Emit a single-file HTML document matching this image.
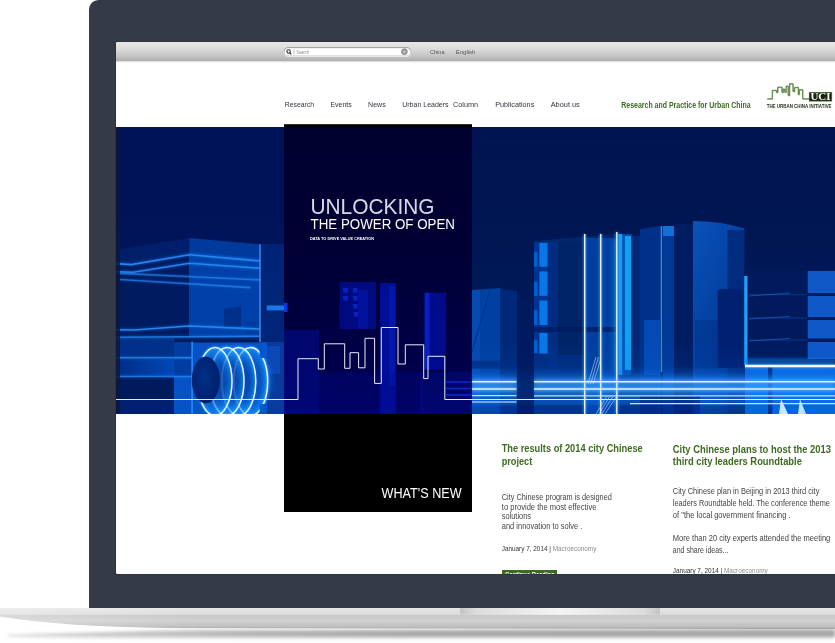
<!DOCTYPE html>
<html lang="en">
<head>
<meta charset="utf-8">
<title>The Urban China Initiative</title>
<style>
html,body{margin:0;padding:0;}
body{width:835px;height:643px;overflow:hidden;background:#fff;position:relative;font-family:"Liberation Sans",sans-serif;}
.abs{position:absolute;}
.t{position:absolute;white-space:nowrap;line-height:1;margin:0;padding:0;}
#bezel{left:89px;top:0;width:760px;height:608px;background:#353a47;border-top-left-radius:9.5px;}
#screen{left:116px;top:42px;width:719px;height:532px;background:#fff;overflow:hidden;border-top-left-radius:1.5px;border-bottom-left-radius:1.5px;box-shadow:0 0 0 1px #2e333f;}
#toolbar{left:0;top:0;width:719px;height:19px;background:linear-gradient(#e9e9e9 0%,#dcdcdc 35%,#c4c4c4 75%,#adadad 100%);}
#search{left:168.2px;top:5.3px;width:126.6px;height:9px;border-radius:5px;background:#fff;box-shadow:inset 0 1px 1.2px #9c9c9c,inset 0 0 0 .6px #c4c4c4,0 1px 0 #e8e8e8;}
#hero{left:0;top:85px;width:719px;height:287px;}
.nav{color:#3a3a44;}
.green{color:#3d6b22;}
.h{font-weight:bold;color:#3d6b22;}
.b{color:#4a4a4a;}
.m{color:#333;}
.m i{font-style:normal;color:#8a8a8a;}
</style>
</head>
<body>
<div id="bezel" class="abs"></div>
<div id="screen" class="abs">
  <div id="toolbar" class="abs"></div>
  <div class="abs" style="left:0;top:19px;width:719px;height:2px;background:linear-gradient(#d8d8d8,#fff);"></div>
  <div id="search" class="abs"></div>
<svg id="hero" class="abs" width="719" height="287" viewBox="116 127 719 287" preserveAspectRatio="none">
<defs>
<linearGradient id="bg" x1="0" y1="0" x2="0" y2="1">
<stop offset="0" stop-color="#001350"/><stop offset=".4" stop-color="#001754"/><stop offset=".7" stop-color="#001a5a"/><stop offset="1" stop-color="#00246c"/>
</linearGradient>
<linearGradient id="lg1" x1="0" y1="0" x2="0" y2="1">
<stop offset="0" stop-color="#0a3fd0" stop-opacity="0"/><stop offset=".35" stop-color="#0a3fd0" stop-opacity=".3"/><stop offset="1" stop-color="#0b46e0" stop-opacity=".45"/>
</linearGradient>
<linearGradient id="cy" x1="0" y1="0" x2="0" y2="1">
<stop offset="0" stop-color="#3b9cff"/><stop offset="1" stop-color="#0a50c8"/>
</linearGradient>
<filter id="glow" x="-20%" y="-20%" width="140%" height="140%"><feGaussianBlur stdDeviation="1.2"/></filter>
<filter id="glow2" x="-20%" y="-50%" width="140%" height="200%"><feGaussianBlur stdDeviation="2.5"/></filter>
</defs>
<rect x="116" y="127" width="719" height="287" fill="url(#bg)"/>
<!-- left structure -->
<rect id="tl" x="116" y="127" width="168" height="125" fill="#00125e" opacity=".6"/>
<!--LEFTS-->
<g id="leftpart">
<defs>
<radialGradient id="disc" cx=".5" cy=".5" r=".5">
<stop offset="0" stop-color="#003088"/><stop offset=".6" stop-color="#0448b0"/><stop offset=".82" stop-color="#0c78e8"/><stop offset="1" stop-color="#30a8ff"/>
</radialGradient>
<radialGradient id="sph" cx=".45" cy=".45" r=".6">
<stop offset="0" stop-color="#003088"/><stop offset="1" stop-color="#001e68"/>
</radialGradient>
<clipPath id="coilclip"><polygon points="150,330 259.5,330 259.5,358 272,358 272,404 259.5,404 259.5,414 150,414"/></clipPath>
<linearGradient id="band2" x1="0" y1="0" x2="1" y2="0"><stop offset="0" stop-color="#002c84"/><stop offset="1" stop-color="#0048b8"/></linearGradient>
</defs>
<!-- box body -->
<polygon points="116,262 189,252 189,337 116,337.500" fill="#001c62" opacity=".8"/>
<polygon points="189,252 260,258 260,337 189,337" fill="#0040a8"/>
<polygon points="189.3,238 260,244.3 260,261 189.3,254.8" fill="#0044ac" opacity=".8"/>
<polygon points="116,250 189.3,238 189.3,254.8 131,264.6 116,263.6" fill="#002a80" opacity=".45"/>
<polygon points="224,309 241,306.500 241,327 224,327" fill="#002c80" opacity=".8"/>
<rect x="246" y="322" width="14" height="14" fill="#00389a" opacity=".8"/>
<rect x="260" y="244" width="24" height="98" fill="#002a86" opacity=".7"/>
<rect x="260" y="342" width="24" height="72" fill="#0a40a8" opacity=".85"/>
<rect x="264" y="346" width="16" height="28" fill="#1050c0" opacity=".7"/>
<!-- lower-left bands -->
<rect x="116" y="338" width="58" height="19" fill="#003088"/>
<rect x="116" y="359" width="58" height="17" fill="url(#band2)"/>
<rect x="116" y="377" width="58" height="22" fill="#001a5e"/>
<rect x="116" y="400.500" width="58" height="13.500" fill="#002070"/>
<!-- bright column behind coil -->
<rect x="174" y="342.500" width="93" height="71.500" fill="#0858d0" opacity=".9"/>
<rect x="174" y="342.500" width="18" height="34" fill="#003898" opacity=".85"/>
<ellipse cx="234" cy="381" rx="38" ry="36" fill="#1888f8" opacity=".35" filter="url(#glow2)"/>
<rect x="191.300" y="341.600" width="1.600" height="72.400" fill="#2a90ff" opacity=".9"/>
<rect x="266.700" y="305.400" width="19.300" height="5" fill="#1878e8"/>
<!-- thin light lines -->
<g fill="none" stroke="#1078e8" stroke-width="3.400" opacity=".4" filter="url(#glow)">
<polyline points="116,263.6 131.3,264.6 189.3,254.8 260,261"/>
<polyline points="116,271.7 133.3,272.2 189.3,263.2 260,268.3"/>
<polyline points="120,273.4 260,279.9" opacity=".7"/>
<polyline points="120,279.5 250.4,287.6" opacity=".7"/>
<polyline points="116,329.8 134,330 189,326 260,329"/>
<polyline points="116,337.3 260,336.3" opacity=".8"/>
<polyline points="116,357.8 192,357.8" opacity=".9"/>
<polyline points="116,376.5 192,376.5" opacity=".8"/>

</g>
<g fill="none" stroke="#2a88f2" stroke-width="1.600" opacity=".95">
<polyline points="116,263.6 131.3,264.6 189.3,254.8 260,261"/>
<polyline points="116,271.7 133.3,272.2 189.3,263.2 260,268.3"/>
<polyline points="120,273.4 260,279.9" opacity=".7"/>
<polyline points="120,279.5 250.4,287.6" opacity=".7"/>
<polyline points="116,329.8 134,330 189,326 260,329"/>
<polyline points="116,337.3 260,336.3" opacity=".8"/>
<polyline points="116,357.8 192,357.8" opacity=".9"/>
<polyline points="116,376.5 192,376.5" opacity=".8"/>
<line x1="260" y1="244.300" x2="260" y2="342" stroke="#3a90f8" stroke-width="1.5"/>
</g>
<!-- coil: back to front -->
<g clip-path="url(#coilclip)">
<g stroke="#38a8ff" stroke-width="3.6" opacity=".55" fill="none" filter="url(#glow)">
<ellipse cx="250.700" cy="381.500" rx="17" ry="34"/><ellipse cx="238.800" cy="381.500" rx="17" ry="34"/><ellipse cx="227" cy="381.500" rx="17" ry="34"/><ellipse cx="215" cy="381.500" rx="17" ry="34"/>
</g>
<g stroke="#e6f6ff" stroke-width="1.5" fill="url(#disc)" fill-opacity=".55">
<ellipse cx="250.700" cy="381.500" rx="17" ry="34"/><ellipse cx="238.800" cy="381.500" rx="17" ry="34"/><ellipse cx="227" cy="381.500" rx="17" ry="34"/><ellipse cx="215" cy="381.500" rx="17" ry="34"/>
</g>
</g>
<ellipse cx="205.800" cy="380" rx="14" ry="23.500" fill="url(#sph)"/>
</g>
<!--LEFTE-->
<!--RIGHTS-->
<g id="rightpart">
<defs>
<linearGradient id="rlow" x1="0" y1="0" x2="0" y2="1">
<stop offset="0" stop-color="#0868e0" stop-opacity="0"/><stop offset=".35" stop-color="#0868e0" stop-opacity=".08"/><stop offset=".5" stop-color="#0c70e8" stop-opacity=".45"/><stop offset=".62" stop-color="#1484f2" stop-opacity=".62"/><stop offset=".86" stop-color="#0c6ce4" stop-opacity=".55"/><stop offset=".9" stop-color="#0858d0" stop-opacity=".3"/><stop offset="1" stop-color="#0858d0" stop-opacity=".25"/>
</linearGradient>
<linearGradient id="face" x1="0" y1="0" x2=".6" y2="1">
<stop offset="0" stop-color="#0a52ba"/><stop offset=".45" stop-color="#0444a6"/><stop offset="1" stop-color="#003490"/>
</linearGradient>
</defs>
<!-- left building -->
<polygon points="472,290 500.5,288 500.5,414 472,414" fill="#0040a2"/>
<polygon points="472,290 480,289.500 480,414 472,414" fill="#0a50b8" opacity=".6"/>
<polygon points="500.5,289 517,291 517,414 500.5,414" fill="#002878"/>
<rect x="472" y="360.700" width="29" height="8" fill="#002c80" opacity=".8"/>
<line x1="472" y1="352" x2="490" y2="290" stroke="#002c80" stroke-width=".8"/>
<rect x="517" y="300" width="17" height="114" fill="#001a60" opacity=".6"/>
<!-- mid building -->
<polygon points="534,241 617,234 640,236 640,414 534,414" fill="#00276e"/>
<rect x="557" y="242" width="28" height="130" fill="#001d5e" opacity=".3"/>
<rect x="585" y="238" width="32" height="176" fill="#0042a4" opacity=".9"/>
<rect x="548.400" y="242" width="9.200" height="130" fill="#003088" opacity=".8"/>
<rect x="534" y="242" width="14.400" height="112" fill="#003490"/>
<g fill="#0060d0">
<rect x="534" y="252" width="3.400" height="14.800"/><rect x="534" y="282" width="3.400" height="14"/><rect x="534" y="310" width="3.400" height="15"/><rect x="534" y="340" width="3.400" height="13"/>
</g>
<g fill="#0878e8">
<rect x="539.400" y="243" width="8.100" height="23.800"/><rect x="539.400" y="271.400" width="8.100" height="24.400"/><rect x="539.400" y="300.500" width="8.100" height="24.500"/><rect x="539.400" y="333" width="8.100" height="20.600"/>
</g>
<rect x="534" y="327" width="83" height="5" fill="#001a5c" opacity=".7"/>
<rect x="534" y="355" width="50" height="20" fill="#002e84" opacity=".7"/>
<!-- cyan band -->
<rect id="cglow" x="612" y="240" width="26" height="132" fill="#1090f0" opacity=".35" filter="url(#glow2)"/>
<rect x="617.700" y="234" width="14" height="141" fill="#0048b0"/>
<rect x="618.400" y="234" width="3.900" height="141" fill="#10a0f0"/>
<rect x="624.800" y="236" width="6.500" height="134" fill="#10a0f0"/>
<rect x="631.300" y="236" width="9" height="139" fill="#002878"/>
<!-- right cylinder building -->
<polygon points="640,229 661,226 661,414 640,414" fill="#003088"/>
<rect x="644" y="320" width="16" height="55" fill="#0860d8" opacity=".55"/>
<rect x="663" y="226" width="11" height="10" fill="#1070d8"/>
<rect x="663" y="236" width="11" height="178" fill="#003898"/>
<rect x="674" y="224" width="19" height="190" fill="#001d62"/>
<path d="M693,221 Q720,221 744.200,228.400 L744.200,414 L693,414 Z" fill="url(#face)"/>
<rect x="727.600" y="230" width="16.600" height="184" fill="#002878" opacity=".85"/>
<rect x="695" y="320" width="22" height="48" fill="#003088" opacity=".5"/>
<path d="M717.600,292.500 Q717.600,288.900 722,288.900 L739,288.900 Q743.400,288.900 743.400,292.500 L743.400,368 L717.600,368 Z" fill="#002070"/>
<!-- far right building -->
<rect x="744" y="270" width="91" height="95" fill="#001a5c"/>
<rect x="744.200" y="276" width="3.300" height="89" fill="#20a0f8"/>
<g fill="#1058c8">
<rect x="807.700" y="271" width="27.300" height="22"/><rect x="807.700" y="296" width="27.300" height="21"/><rect x="807.700" y="320" width="27.300" height="18.500"/><rect x="807.700" y="342" width="27.300" height="17"/>
</g>
<g stroke="#0848b0" stroke-width=".8" opacity=".8"><line x1="749" y1="294.700" x2="807" y2="294.700"/><line x1="749" y1="318" x2="807" y2="318"/><line x1="749" y1="340" x2="807" y2="340"/></g>
<rect x="745" y="358" width="90" height="8" fill="#1080f0" opacity=".45" filter="url(#glow)"/>
<rect x="745" y="366" width="90" height="48" fill="#0a6ae2"/>
<rect x="768" y="367" width="4.400" height="47" fill="#002878"/>
<!-- lower glow -->
<rect x="472" y="340" width="363" height="74" fill="url(#rlow)"/>
<rect x="472" y="377" width="44.400" height="16" fill="#58b8ff" opacity=".3" filter="url(#glow2)"/><rect x="534" y="377" width="301" height="16" fill="#58b8ff" opacity=".3" filter="url(#glow2)"/>
<rect x="517" y="330" width="17" height="84" fill="#001a60" opacity=".75"/>
<rect x="640" y="396" width="60" height="18" fill="#002070" opacity=".5"/>
<!-- vertical lines -->
<g stroke="#58b0ff" stroke-width="3.500" opacity=".5" filter="url(#glow)">
<line x1="584.700" y1="234" x2="584.700" y2="414"/><line x1="600.700" y1="234" x2="600.700" y2="414"/><line x1="616.800" y1="232" x2="616.800" y2="414"/>
</g>
<g stroke="#e4f4ff" stroke-width="1.400">
<line x1="584.700" y1="234" x2="584.700" y2="414"/><line x1="600.700" y1="234" x2="600.700" y2="414"/><line x1="616.800" y1="232" x2="616.800" y2="414"/>
</g>
<line x1="661.500" y1="226" x2="661.500" y2="372" stroke="#1a90f0" stroke-width="1.600"/>
<!-- horizontal lines -->
<g stroke="#70c0ff" stroke-width="4" opacity=".45" filter="url(#glow)">
<line x1="472" y1="381.800" x2="516.400" y2="381.800"/><line x1="534" y1="381.800" x2="835" y2="381.800"/>
<line x1="472" y1="389" x2="516.400" y2="389"/><line x1="534" y1="389" x2="835" y2="389"/>
<line x1="745" y1="366" x2="835" y2="366"/>
</g>
<g stroke="#dcf0ff" stroke-width="1.500">
<line x1="472" y1="381.800" x2="516.400" y2="381.800"/><line x1="534" y1="381.800" x2="835" y2="381.800"/>
<line x1="472" y1="389" x2="516.400" y2="389"/><line x1="534" y1="389" x2="835" y2="389"/>
<line x1="472" y1="402" x2="516.400" y2="402" stroke-width="1.200"/>
<line x1="745" y1="366" x2="835" y2="366" stroke-width="2.400" stroke="#f0faff"/>
</g>
<g stroke="#c0e2ff" stroke-width="1.200">
<line x1="472" y1="395.600" x2="516.400" y2="395.600"/><line x1="534" y1="395.800" x2="835" y2="395.800"/><line x1="630" y1="403.600" x2="835" y2="403.600"/>
</g>
<g id="hatch" stroke="#d8ecff" stroke-width=".7" opacity=".75">
<line x1="588" y1="384" x2="596" y2="357"/><line x1="590.500" y1="384" x2="598.500" y2="357"/><line x1="593" y1="384" x2="601" y2="358"/>
<line x1="596" y1="414" x2="607" y2="396"/><line x1="599" y1="414" x2="610" y2="396"/><line x1="602" y1="414" x2="613" y2="396"/><line x1="605" y1="414" x2="616" y2="397"/>
</g>
<g stroke="#2a80e8" stroke-width=".7" opacity=".7">
<line x1="749" y1="296" x2="790" y2="293"/><line x1="749" y1="319" x2="790" y2="316.500"/><line x1="749" y1="341" x2="790" y2="338.500"/>
</g>
<polygon points="779,414 781,399 788,414" fill="#e0f4ff" opacity=".9"/>
<polygon points="798,414 800,399 806,414" fill="#e0f4ff" opacity=".85"/>
</g>
<!--RIGHTE-->
<rect x="116" y="127" width="4" height="287" fill="#0e1838" opacity=".85"/>
</svg>

<div class="abs" style="left:168px;top:82px;width:188px;height:3px;background:#000;"></div>
<div id="pline" class="abs" style="left:168px;top:81.700px;width:188px;height:.7px;background:#2c3626;"></div>
<div class="abs" style="left:168px;top:85px;width:188px;height:287px;background:linear-gradient(#00002e 0%,#000034 40%,#00003c 60%,#000048 80%,#000058 100%);"></div>
<svg class="abs" style="left:168px;top:85px;" width="188" height="287" viewBox="284 127 188 287">
<rect x="339.500" y="282" width="36.500" height="47" fill="#000c8c" opacity=".85"/>
<g fill="#0a28c8" opacity=".85"><rect x="343" y="288" width="5" height="4.500"/><rect x="353" y="288" width="4.500" height="4.500"/><rect x="343" y="296" width="5" height="4.500"/><rect x="353" y="296" width="4.500" height="4.500"/><rect x="353" y="304" width="4.500" height="4.500"/><rect x="354" y="312" width="4" height="4.500"/></g>
<rect x="358" y="290" width="10" height="39" fill="#0418b0" opacity=".6"/>
<rect x="380" y="283" width="16" height="131" fill="#0010a8" opacity=".85"/>
<rect x="389" y="286" width="6" height="100" fill="#0820c0" opacity=".5"/>
<rect x="424.600" y="292.700" width="21.400" height="77" fill="#000ea0" opacity=".8"/>
<rect x="424.600" y="292.700" width="5" height="77" fill="#0a28d0" opacity=".75"/>
<rect x="284" y="330" width="35" height="84" fill="#000c90" opacity=".55"/>
<rect x="284" y="303" width="3.500" height="9" fill="#0a38e0"/>
<rect x="319" y="372" width="105" height="42" fill="#000a88" opacity=".3"/>
<rect x="420" y="372" width="52" height="42" fill="#000c90" opacity=".4"/>
<g stroke="#1030d8" stroke-width="1.600" opacity=".8"><line x1="446" y1="382" x2="472" y2="382"/><line x1="446" y1="388.500" x2="472" y2="388.500"/><line x1="446" y1="395" x2="472" y2="395"/></g>
</svg>
<div class="abs" style="left:168px;top:372px;width:188px;height:98px;background:#000;"></div>
<svg class="abs" style="left:0;top:85px;" width="719" height="287" viewBox="116 127 719 287">
<polyline fill="none" stroke="#e8ecf8" stroke-width="1" points="116,399.5 298,399.5 298,358.7 318.3,358.7 318.3,369 324.3,369 324.3,343.8 344.7,343.8 344.7,368.3 350,368.3 350,352.7 358.6,352.7 358.6,367.8 365,367.8 365,338.3 374.6,338.3 374.6,383.4 381.3,383.4 381.3,327.5 398,327.5 398,364 405.3,364 405.3,344.8 423.7,344.8 423.7,378.6 428,378.6 428,356.3 444.8,356.3 444.8,399.5 835,399.5"/>
</svg>

<!--LOGOS-->
<svg class="abs" style="left:0;top:0;" width="719" height="80" viewBox="0 0 719 80">
<polyline fill="none" stroke="#1c2414" stroke-width=".7" stroke-linejoin="round" points="651.0,56.8 656.2,56.8 656.2,48.3 660.4,48.3 660.4,50.4 661.6,50.4 661.6,45.1 665.9,45.1 665.9,50.3 667.0,50.3 667.0,47.0 668.7,47.0 668.7,50.2 670.1,50.2 670.1,44.0 672.1,44.0 672.1,53.4 673.4,53.4 673.4,41.7 676.9,41.7 676.9,49.4 678.4,49.4 678.4,45.3 682.2,45.3 682.2,52.4 683.1,52.4 683.1,47.7 686.6,47.7 686.6,56.8 693.4,56.8" transform="translate(.5,.5)" opacity=".55"/>
<polyline fill="none" stroke="#4c7e2c" stroke-width=".9" stroke-linejoin="round" points="651.0,56.8 656.2,56.8 656.2,48.3 660.4,48.3 660.4,50.4 661.6,50.4 661.6,45.1 665.9,45.1 665.9,50.3 667.0,50.3 667.0,47.0 668.7,47.0 668.7,50.2 670.1,50.2 670.1,44.0 672.1,44.0 672.1,53.4 673.4,53.4 673.4,41.7 676.9,41.7 676.9,49.4 678.4,49.4 678.4,45.3 682.2,45.3 682.2,52.4 683.1,52.4 683.1,47.7 686.6,47.7 686.6,56.8 693.4,56.8"/>
<rect x="693.2" y="50.3" width="22.6" height="8.8" fill="#18240e"/>
<rect x="693.2" y="50.3" width="22.6" height="8.8" fill="none" stroke="#3d6b22" stroke-width=".6"/>
<circle cx="172.600" cy="9.500" r="1.700" fill="none" stroke="#333" stroke-width="1.100"/>
<line x1="173.800" y1="10.800" x2="175.300" y2="12.400" stroke="#333" stroke-width="1.200"/>
<line x1="178" y1="7.300" x2="178" y2="12.300" stroke="#999" stroke-width=".6"/>
<circle cx="288.400" cy="9.700" r="2.900" fill="#9a9a9a" stroke="#777" stroke-width=".7"/>
<circle cx="288.400" cy="9.700" r="1.500" fill="#bdbdbd"/>
</svg>
<!--LOGOE-->
<div id="btn" class="abs" style="left:385.7px;top:527.6px;width:55px;height:10px;background:#3d6b22;"></div>
<svg class="abs" style="left:0;top:0;will-change:transform;" width="719" height="532" viewBox="0 0 719 532" font-family="Liberation Sans, sans-serif">
<text id="t_unlock" x="194.5" y="172.0" font-size="22" textLength="124.0" lengthAdjust="spacingAndGlyphs" fill="#f4f6ff" fill-opacity=".88">UNLOCKING</text>
<text id="t_power" x="194.5" y="187.0" font-size="14" textLength="144.5" lengthAdjust="spacingAndGlyphs" fill="#fff">THE POWER OF OPEN</text>
<text id="t_data" x="194.0" y="198.0" font-size="4.4" textLength="64.0" lengthAdjust="spacingAndGlyphs" fill="#fff" font-weight="bold">DATA TO DRIVE VALUE CREATION</text>
<text id="t_whats" x="265.6" y="456.0" font-size="14" textLength="80.0" lengthAdjust="spacingAndGlyphs" fill="#fff">WHAT'S NEW</text>
<text id="t_search" x="180.5" y="12.0" font-size="4.6" textLength="12.5" lengthAdjust="spacingAndGlyphs" fill="#8a8a8a">Search</text>
<text id="t_china" x="314.0" y="12.4" font-size="6" textLength="14.5" lengthAdjust="spacingAndGlyphs" fill="#555">China</text>
<text id="t_dot" x="332.5" y="12.4" font-size="6" textLength="2.0" lengthAdjust="spacingAndGlyphs" fill="#999">·</text>
<text id="t_english" x="339.8" y="12.4" font-size="6" textLength="19.6" lengthAdjust="spacingAndGlyphs" fill="#555">English</text>
<text id="t_n1" x="168.8" y="65.0" font-size="7.4" textLength="29.3" lengthAdjust="spacingAndGlyphs" fill="#33333f">Research</text>
<text id="t_n2" x="214.4" y="65.0" font-size="7.4" textLength="21.4" lengthAdjust="spacingAndGlyphs" fill="#33333f">Events</text>
<text id="t_n3" x="252.1" y="65.0" font-size="7.4" textLength="17.6" lengthAdjust="spacingAndGlyphs" fill="#33333f">News</text>
<text id="t_n4" x="286.2" y="65.0" font-size="7.4" textLength="46.4" lengthAdjust="spacingAndGlyphs" fill="#33333f">Urban Leaders</text>
<text id="t_n5" x="337.0" y="65.0" font-size="7.4" textLength="25.0" lengthAdjust="spacingAndGlyphs" fill="#33333f">Column</text>
<text id="t_n6" x="379.2" y="65.0" font-size="7.4" textLength="39.1" lengthAdjust="spacingAndGlyphs" fill="#33333f">Publications</text>
<text id="t_n7" x="434.7" y="65.0" font-size="7.4" textLength="29.1" lengthAdjust="spacingAndGlyphs" fill="#33333f">About us</text>
<text id="t_tag" x="505.3" y="65.5" font-size="8.3" textLength="129.4" lengthAdjust="spacingAndGlyphs" fill="#3d6b22" font-weight="bold">Research and Practice for Urban China</text>
<text id="t_uci" x="694.4" y="58.4" font-size="10.5" textLength="20.2" lengthAdjust="spacingAndGlyphs" fill="#fff" font-weight="bold" font-family="Liberation Serif, serif">UCI</text>
<text id="t_init" x="650.7" y="66.0" font-size="4.8" textLength="64.9" lengthAdjust="spacingAndGlyphs" fill="#1f2a14" font-weight="bold">THE URBAN CHINA INITIATIVE</text>
<text id="t_h1a" x="385.7" y="410.0" font-size="10.5" textLength="141.0" lengthAdjust="spacingAndGlyphs" fill="#3d6b22" font-weight="bold">The results of 2014 city Chinese</text>
<text id="t_h1b" x="385.7" y="422.7" font-size="10.5" textLength="30.6" lengthAdjust="spacingAndGlyphs" fill="#3d6b22" font-weight="bold">project</text>
<text id="t_b1a" x="385.8" y="458.0" font-size="8.2" textLength="110.0" lengthAdjust="spacingAndGlyphs" fill="#444">City Chinese program is designed</text>
<text id="t_b1b" x="385.8" y="467.6" font-size="8.2" textLength="94.6" lengthAdjust="spacingAndGlyphs" fill="#444">to provide the most effective</text>
<text id="t_b1c" x="385.8" y="477.0" font-size="8.2" textLength="29.2" lengthAdjust="spacingAndGlyphs" fill="#444">solutions</text>
<text id="t_b1d" x="385.8" y="486.6" font-size="8.2" textLength="80.6" lengthAdjust="spacingAndGlyphs" fill="#444">and innovation to solve .</text>
<text id="t_m1" x="385.7" y="508.8" font-size="7" textLength="94.7" lengthAdjust="spacingAndGlyphs" fill="#333">January 7, 2014 | <tspan fill="#8a8a8a">Macroeconomy</tspan></text>
<text id="t_cont" x="389.0" y="535.0" font-size="6.6" textLength="49.6" lengthAdjust="spacingAndGlyphs" fill="#fff" font-weight="bold">Continue Reading</text>
<text id="t_h2a" x="556.8" y="410.6" font-size="10.5" textLength="158.2" lengthAdjust="spacingAndGlyphs" fill="#3d6b22" font-weight="bold">City Chinese plans to host the 2013</text>
<text id="t_h2b" x="556.8" y="423.0" font-size="10.5" textLength="129.1" lengthAdjust="spacingAndGlyphs" fill="#3d6b22" font-weight="bold">third city leaders Roundtable</text>
<text id="t_b2a" x="556.8" y="452.2" font-size="8.2" textLength="146.6" lengthAdjust="spacingAndGlyphs" fill="#444">City Chinese plan in Beijing in 2013 third city</text>
<text id="t_b2b" x="556.8" y="463.8" font-size="8.2" textLength="157.1" lengthAdjust="spacingAndGlyphs" fill="#444">leaders Roundtable held. The conference theme</text>
<text id="t_b2c" x="556.8" y="475.5" font-size="8.2" textLength="117.9" lengthAdjust="spacingAndGlyphs" fill="#444">of "the local government financing .</text>
<text id="t_b2d" x="556.8" y="498.8" font-size="8.2" textLength="157.5" lengthAdjust="spacingAndGlyphs" fill="#444">More than 20 city experts attended the meeting</text>
<text id="t_b2e" x="556.8" y="510.5" font-size="8.2" textLength="55.6" lengthAdjust="spacingAndGlyphs" fill="#444">and share ideas...</text>
<text id="t_m2" x="556.8" y="530.8" font-size="7" textLength="95.0" lengthAdjust="spacingAndGlyphs" fill="#333">January 7, 2014 | <tspan fill="#8a8a8a">Macroeconomy</tspan></text>
</svg>

</div>
<svg class="abs" style="left:0;top:600px;" width="835" height="43" viewBox="0 600 835 43">
<defs>
<linearGradient id="bs1" x1="0" y1="0" x2="0" y2="1">
<stop offset="0" stop-color="#e6e6e6"/><stop offset=".3" stop-color="#dcdcdc"/><stop offset=".36" stop-color="#c8c8c8"/><stop offset=".62" stop-color="#d0d0d0"/><stop offset=".9" stop-color="#bebebe"/><stop offset="1" stop-color="#9e9e9e"/>
</linearGradient>
<linearGradient id="bs2" x1="0" y1="0" x2="0" y2="1">
<stop offset="0" stop-color="#b9b9b9"/><stop offset=".5" stop-color="#a2a2a2"/><stop offset=".75" stop-color="#b4b4b4" stop-opacity=".8"/><stop offset="1" stop-color="#ffffff" stop-opacity="0"/>
</linearGradient>
<linearGradient id="bs3" x1="0" y1="0" x2="1" y2="0">
<stop offset="0" stop-color="#fff" stop-opacity=".7"/><stop offset=".25" stop-color="#fff" stop-opacity=".42"/><stop offset=".6" stop-color="#fff" stop-opacity=".15"/><stop offset="1" stop-color="#fff" stop-opacity="0"/>
</linearGradient>
<linearGradient id="bs4" x1="0" y1="0" x2="1" y2="0">
<stop offset="0" stop-color="#fff" stop-opacity=".3"/><stop offset="1" stop-color="#fff" stop-opacity="0"/>
</linearGradient>
<linearGradient id="nt" x1="0" y1="0" x2="1" y2="0">
<stop offset="0" stop-color="#c4c4c4"/><stop offset=".08" stop-color="#dcdcdc"/><stop offset=".5" stop-color="#f4f4f4"/><stop offset=".92" stop-color="#dcdcdc"/><stop offset="1" stop-color="#c4c4c4"/>
</linearGradient>
<filter id="bl" x="-5%" y="-100%" width="110%" height="300%"><feGaussianBlur stdDeviation="1.500"/></filter>
</defs>
<path d="M8,634.500 Q100,631.500 200,630 L835,629 L835,640 L200,640 Q90,640 8,637 Z" fill="url(#bs2)" filter="url(#bl)"/>
<rect x="0" y="628" width="420" height="15" fill="url(#bs3)"/>
<path d="M0,608 L835,608 L835,629 L170,628 Q60,626.500 0,616.500 Z" fill="url(#bs1)"/>
<path d="M0,608 L200,608 L200,628.500 L170,628 Q60,626.500 0,616.500 Z" fill="url(#bs4)"/>
<path d="M460,608 L660,608 L660,612.500 Q660,614.800 657,614.800 L463,614.800 Q460,614.800 460,612.500 Z" fill="url(#nt)"/>
</svg>

</body>
</html>
